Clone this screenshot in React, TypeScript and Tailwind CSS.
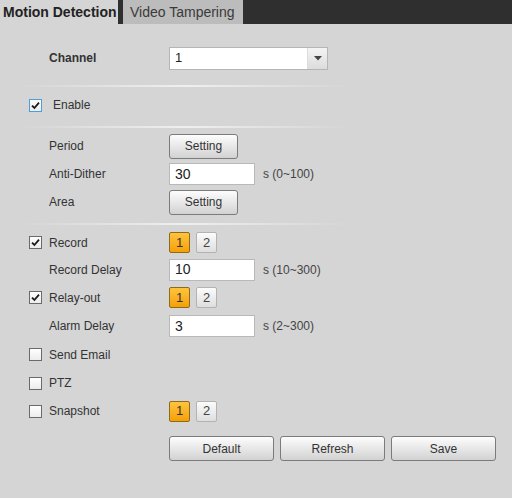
import React from "react";

const FONT = "font-['Liberation_Sans',Arial,sans-serif]";

function Check({ checked, focus }: { checked?: boolean; focus?: boolean }) {
  return (
    <span
      className={
        "flex h-[13px] w-[13px] shrink-0 items-center justify-center border bg-gradient-to-b from-[#ffffff] to-[#ececec] " +
        (focus ? "border-[#4a9fd8]" : "border-[#6a6a6a]")
      }
    >
      {checked && (
        <svg width="9" height="9" viewBox="0 0 9 9">
          <path d="M1 4.6 L3.4 7 L8 1.6" fill="none" stroke="#1a1a1a" strokeWidth="1.8" />
        </svg>
      )}
    </span>
  );
}

function Divider({ mt, mb }: { mt: string; mb: string }) {
  return (
    <div className={`${mt} ${mb} ml-[-9px] h-[2px] w-[330px] bg-gradient-to-r from-transparent via-[#efefef] to-transparent`} />
  );
}

function SettingBtn({ label, w = "w-[69px]" }: { label: string; w?: string }) {
  return (
    <button
      type="button"
      className={`${w} h-[25px] rounded-[3px] border border-[#7b7b7b] bg-gradient-to-b from-[#fdfdfd] to-[#d2d2d2] text-[12px] text-[#333]`}
    >
      {label}
    </button>
  );
}

function TextInput({ value }: { value: string }) {
  return (
    <div className="flex h-[22px] w-[86px] items-center border border-[#b9b9b9] bg-white pl-[5px] text-[14px] text-[#222]">
      {value}
    </div>
  );
}

function Toggles() {
  return (
    <div className="flex gap-[6px]">
      <span className="flex h-[21px] w-[21px] items-center justify-center rounded-[2px] border border-[#8c6a1e] bg-gradient-to-b from-[#ffc43a] to-[#f5a000] text-[13px] text-[#333]">
        1
      </span>
      <span className="flex h-[21px] w-[21px] items-center justify-center rounded-[2px] border border-[#b3b3b3] bg-gradient-to-b from-[#fcfcfc] to-[#dedede] text-[13px] text-[#444]">
        2
      </span>
    </div>
  );
}

function Row({
  h,
  label,
  check,
  checked,
  focus,
  gap = "ml-[7px]",
  children,
}: {
  h: string;
  label: string;
  check?: boolean;
  checked?: boolean;
  focus?: boolean;
  gap?: string;
  children?: React.ReactNode;
}) {
  return (
    <div className={`flex ${h} items-center`}>
      <div className="flex w-[140px] items-center">
        {check ? <Check checked={checked} focus={focus} /> : <span className="w-[13px]" />}
        <span className={`${check ? gap : "ml-[7px]"} text-[12px] text-[#333]`}>{label}</span>
      </div>
      {children}
    </div>
  );
}

function Unit({ children }: { children: React.ReactNode }) {
  return <span className="ml-[8px] text-[12px] text-[#444]">{children}</span>;
}

export default function App() {
  return (
    <div className={`${FONT} h-[498px] w-[512px] overflow-hidden bg-[#d5d5d5]`}>
      {/* Tabs */}
      <div className="flex h-[24px] bg-[#2f2f2f]">
        <div className="flex w-[118px] items-center bg-[#d5d5d5] pl-[3px] text-[14px] font-bold text-[#222]">
          Motion Detection
        </div>
        <div className="ml-[5px] flex w-[120px] items-center bg-[#bcbcbc] pl-[7px] text-[14px] text-[#3a3a3a]">
          Video Tampering
        </div>
      </div>

      <div className="pl-[29px] pt-[20px]">
        {/* Channel */}
        <div className="flex h-[28px] items-center">
          <span className="w-[140px] pl-[20px] text-[12px] font-bold text-[#333]">Channel</span>
          <div className="flex h-[23px] w-[159px] border border-[#b5b5b5] bg-white">
            <span className="flex flex-1 items-center pl-[5px] text-[13px] text-[#222]">1</span>
            <span className="flex w-[20px] items-center justify-center border-l border-[#dcdcdc] bg-gradient-to-b from-[#f4f4f4] to-[#dcdcdc]">
              <svg width="8" height="5" viewBox="0 0 8 5">
                <path d="M0 0 H8 L4 4.5 Z" fill="#444" />
              </svg>
            </span>
          </div>
        </div>

        <Divider mt="mt-[13px]" mb="mb-[4px]" />
        <Row h="h-[28px]" label="Enable" check checked focus gap="ml-[11px]" />
        <Divider mt="mt-[7px]" mb="mb-[4px]" />

        <Row h="h-[28px]" label="Period">
          <SettingBtn label="Setting" />
        </Row>
        <Row h="h-[28px]" label="Anti-Dither">
          <TextInput value="30" />
          <Unit>s (0~100)</Unit>
        </Row>
        <Row h="h-[28px]" label="Area">
          <SettingBtn label="Setting" />
        </Row>

        <Divider mt="mt-[7px]" mb="mb-[4px]" />

        <Row h="h-[27px]" label="Record" check checked>
          <Toggles />
        </Row>
        <Row h="h-[27px]" label="Record Delay">
          <TextInput value="10" />
          <Unit>s (10~300)</Unit>
        </Row>
        <Row h="h-[29px]" label="Relay-out" check checked>
          <Toggles />
        </Row>
        <Row h="h-[28px]" label="Alarm Delay">
          <TextInput value="3" />
          <Unit>s (2~300)</Unit>
        </Row>
        <Row h="h-[29px]" label="Send Email" check />
        <Row h="h-[28px]" label="PTZ" check />
        <Row h="h-[28px]" label="Snapshot" check>
          <Toggles />
        </Row>

        <div className="ml-[140px] mt-[11px] flex gap-[6px]">
          <SettingBtn label="Default" w="w-[105px]" />
          <SettingBtn label="Refresh" w="w-[105px]" />
          <SettingBtn label="Save" w="w-[105px]" />
        </div>
      </div>
    </div>
  );
}
